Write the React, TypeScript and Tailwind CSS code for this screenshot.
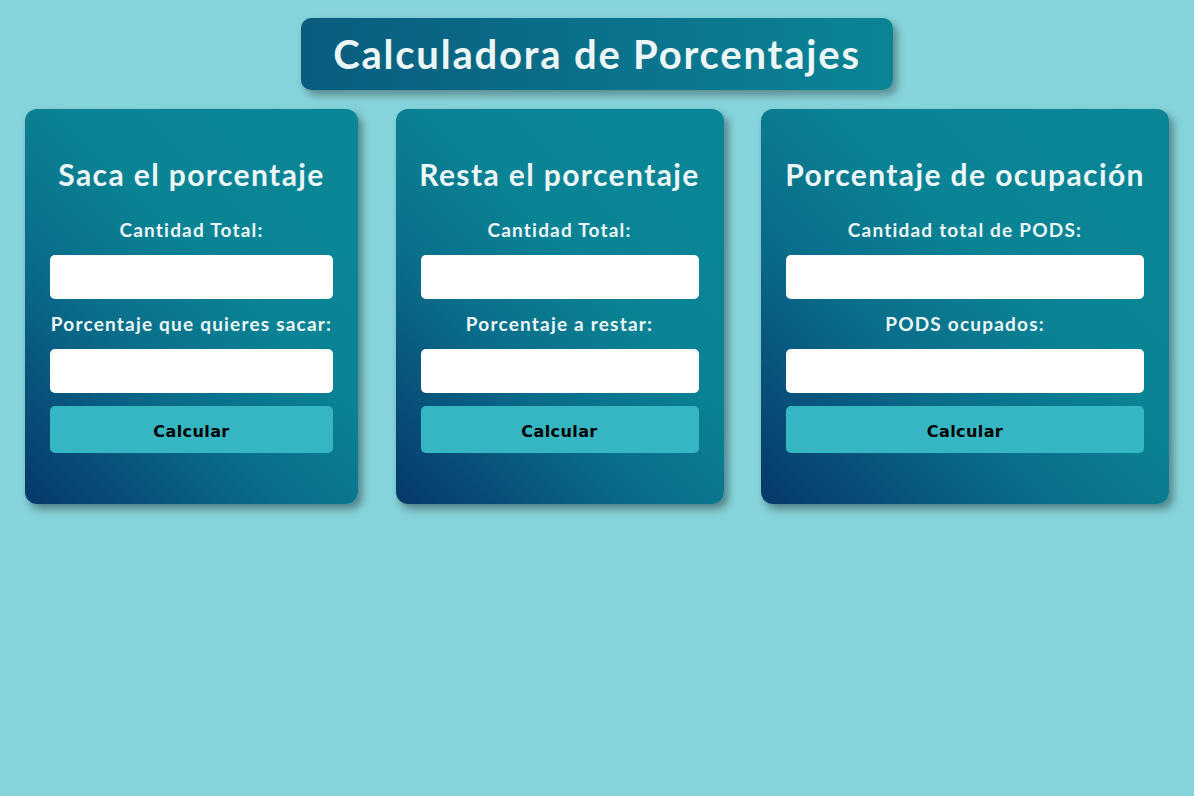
import React from 'react';

const CARDS = [
  { title: 'Saca el porcentaje', width: 'w-[333px]', first: 'Cantidad Total:', second: 'Porcentaje que quieres sacar:' },
  { title: 'Resta el porcentaje', width: 'w-[328px]', first: 'Cantidad Total:', second: 'Porcentaje a restar:' },
  { title: 'Porcentaje de ocupación', width: 'w-[408px]', first: 'Cantidad total de PODS:', second: 'PODS ocupados:' },
];

const GRADIENT = 'bg-[linear-gradient(45deg,#06386a_0%,#0a6d8a_35%,#0a8494_60%,#0b8696_100%)]';

export default function App() {
  return (
    <div className="min-h-screen bg-[#86d4db] pt-[18px] font-['Lato','Open_Sans',sans-serif] text-[#edf6f6]">
      <div className="flex justify-center">
        <h1 className="h-[72px] w-[592px] flex items-center justify-center rounded-[10px] bg-[linear-gradient(90deg,#0a5c7e,#0b8596)] text-[40px] tracking-[1.8px] font-bold shadow-[4px_5px_8px_rgba(0,0,0,0.35)]">
          Calculadora de Porcentajes
        </h1>
      </div>

      <div className="mt-[19px] flex justify-between px-[25px] items-start">
        {CARDS.map((card) => (
          <div
            key={card.title}
            className={`${card.width} ${GRADIENT} rounded-xl px-[25px] pt-[48px] pb-[51px] flex flex-col items-center shadow-[4px_5px_8px_rgba(0,0,0,0.4)]`}
          >
            <h2 className="text-[30px] tracking-[1.4px] leading-[34px] font-bold whitespace-nowrap">{card.title}</h2>
            <label className="mt-[28px] text-[19px] tracking-[1.2px] leading-[22px] font-bold whitespace-nowrap">{card.first}</label>
            <input type="text" className="mt-[14px] h-[44px] w-full rounded-[5px] bg-white outline-none" />
            <label className="mt-[14px] text-[19px] tracking-[1.2px] leading-[22px] font-bold whitespace-nowrap">{card.second}</label>
            <input type="text" className="mt-[14px] h-[44px] w-full rounded-[5px] bg-white outline-none" />
            <button className="mt-[13px] h-[47px] w-full rounded-[5px] bg-[#36b5c3] pt-[4px] text-black text-[16px] tracking-[0.4px] font-bold font-['DejaVu_Sans',Arial,sans-serif]">
              Calcular
            </button>
          </div>
        ))}
      </div>
    </div>
  );
}
